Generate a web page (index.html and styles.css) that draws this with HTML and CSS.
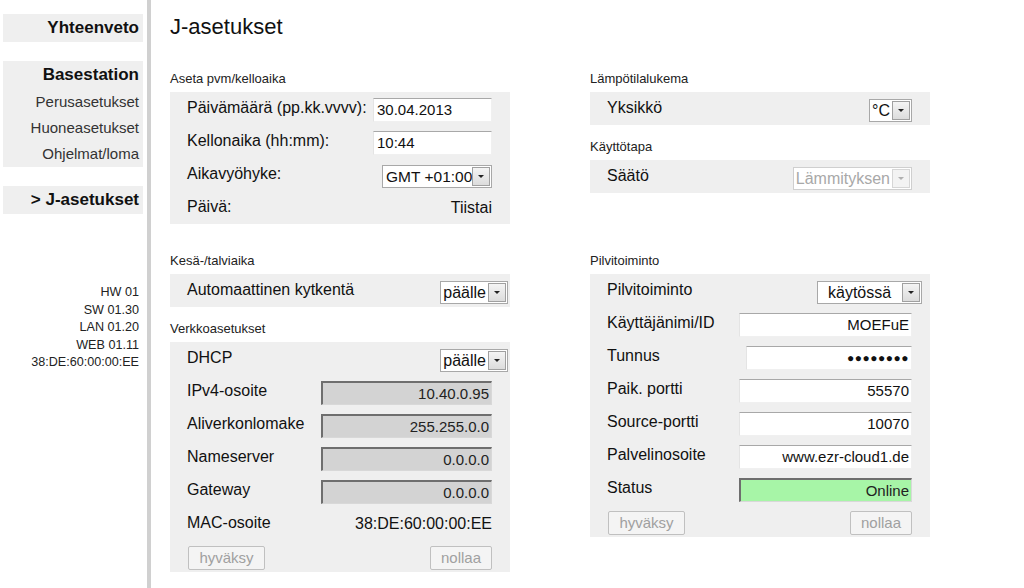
FILE: index.html
```html
<!DOCTYPE html>
<html lang="fi">
<head>
<meta charset="utf-8">
<title>J-asetukset</title>
<link rel="stylesheet" href="styles.css">
</head>
<body>
<div class="page">
  <nav class="sidebar">
    <div class="navbox"><div class="nav-title">Yhteenveto</div></div>
    <div class="navbox">
      <div class="nav-title">Basestation</div>
      <div class="nav-link">Perusasetukset</div>
      <div class="nav-link">Huoneasetukset</div>
      <div class="nav-link">Ohjelmat/loma</div>
    </div>
    <div class="navbox"><div class="nav-title">&gt; J-asetukset</div></div>
    <div class="versions">
      <div>HW 01</div>
      <div>SW 01.30</div>
      <div>LAN 01.20</div>
      <div>WEB 01.11</div>
      <div>38:DE:60:00:00:EE</div>
    </div>
  </nav>
  <main class="main">
    <h1 class="title">J-asetukset</h1>
    <div class="grid">
      <div class="col">
        <div class="sec-label">Aseta pvm/kelloaika</div>
        <div class="box">
          <div class="row"><span class="lbl">Päivämäärä (pp.kk.vvvv):</span><span class="inp inp-left w-date">30.04.2013</span></div>
          <div class="row"><span class="lbl">Kellonaika (hh:mm):</span><span class="inp inp-left w-date">10:44</span></div>
          <div class="row"><span class="lbl">Aikavyöhyke:</span><span class="sel w-gmt"><span class="sel-text">GMT +01:00</span><span class="sel-btn"></span></span></div>
          <div class="row"><span class="lbl">Päivä:</span><span class="val">Tiistai</span></div>
        </div>
      </div>
      <div class="col">
        <div class="sec-label">Lämpötilalukema</div>
        <div class="box">
          <div class="row"><span class="lbl">Yksikkö</span><span class="sel"><span class="sel-text">°C</span><span class="sel-btn"></span></span></div>
        </div>
        <div class="sec-label sec-gap">Käyttötapa</div>
        <div class="box">
          <div class="row"><span class="lbl">Säätö</span><span class="sel sel-disabled"><span class="sel-text">Lämmityksen</span><span class="sel-btn"></span></span></div>
        </div>
      </div>
      <div class="col">
        <div class="sec-label">Kesä-/talviaika</div>
        <div class="box">
          <div class="row row-wide"><span class="lbl">Automaattinen kytkentä</span><span class="sel"><span class="sel-text">päälle</span><span class="sel-btn"></span></span></div>
        </div>
        <div class="sec-label sec-gap">Verkkoasetukset</div>
        <div class="box">
          <div class="row row-wide"><span class="lbl">DHCP</span><span class="sel"><span class="sel-text">päälle</span><span class="sel-btn"></span></span></div>
          <div class="row"><span class="lbl">IPv4-osoite</span><span class="inp ro w-net">10.40.0.95</span></div>
          <div class="row"><span class="lbl">Aliverkonlomake</span><span class="inp ro w-net">255.255.0.0</span></div>
          <div class="row"><span class="lbl">Nameserver</span><span class="inp ro w-net">0.0.0.0</span></div>
          <div class="row"><span class="lbl">Gateway</span><span class="inp ro w-net">0.0.0.0</span></div>
          <div class="row"><span class="lbl">MAC-osoite</span><span class="val">38:DE:60:00:00:EE</span></div>
          <div class="btn-row"><span class="btn w-ok">hyväksy</span><span class="btn w-reset">nollaa</span></div>
        </div>
      </div>
      <div class="col">
        <div class="sec-label">Pilvitoiminto</div>
        <div class="box">
          <div class="row row-cloud"><span class="lbl">Pilvitoiminto</span><span class="sel w-cloud"><span class="sel-text">käytössä</span><span class="sel-btn"></span></span></div>
          <div class="row"><span class="lbl">Käyttäjänimi/ID</span><span class="inp w-cl">MOEFuE</span></div>
          <div class="row"><span class="lbl">Tunnus</span><span class="inp w-pw pw">●●●●●●●●</span></div>
          <div class="row"><span class="lbl">Paik. portti</span><span class="inp w-cl">55570</span></div>
          <div class="row"><span class="lbl">Source-portti</span><span class="inp w-cl">10070</span></div>
          <div class="row"><span class="lbl">Palvelinosoite</span><span class="inp w-cl">www.ezr-cloud1.de</span></div>
          <div class="row"><span class="lbl">Status</span><span class="inp ro online w-cl">Online</span></div>
          <div class="btn-row"><span class="btn w-ok">hyväksy</span><span class="btn w-reset">nollaa</span></div>
        </div>
      </div>
    </div>
  </main>
</div>
</body>
</html>
```

FILE: styles.css
```css
* { box-sizing: border-box; }
html, body { margin: 0; padding: 0; background: #fff; }
body {
  font-family: "Liberation Sans", Arial, sans-serif;
  color: #111;
  width: 1024px;
  height: 588px;
  overflow: hidden;
}
.page { display: flex; height: 588px; }

.sidebar {
  width: 151px;
  flex: none;
  border-right: 4px solid #d0d0d0;
  padding: 14px 4px 0 3px;
  display: flex;
  flex-direction: column;
  gap: 19px;
}
.navbox {
  background: #efefef;
  text-align: right;
  padding-right: 4px;
}
.nav-title {
  font-weight: bold;
  font-size: 17px;
  line-height: 28px;
  color: #111;
}
.nav-link {
  font-size: 15px;
  line-height: 26px;
  color: #333;
}
.versions {
  margin-top: 51px;
  text-align: right;
  padding-right: 4px;
  font-size: 12.6px;
  line-height: 17.5px;
  color: #222;
}

.main { flex: 1; padding: 14px 0 0 19px; }
.title {
  margin: 0;
  font-size: 22px;
  line-height: 26px;
  font-weight: normal;
  color: #111;
}
.grid {
  margin-top: 31px;
  display: grid;
  grid-template-columns: 340px 340px;
  column-gap: 80px;
  row-gap: 29px;
  align-items: start;
}
.sec-label {
  font-size: 13px;
  line-height: 16px;
  color: #222;
  margin-bottom: 5px;
}
.sec-gap { margin-top: 14px; }
.box { background: #efefef; }
.row {
  height: 33px;
  display: flex;
  align-items: center;
  justify-content: space-between;
  padding: 0 18px 0 17px;
}
.row-wide { padding-right: 2px; }
.row-cloud { padding-right: 8px; }
.lbl { font-size: 16px; color: #111; margin-top: -1px; white-space: nowrap; }
.val { font-size: 16px; color: #111; white-space: nowrap; }

.inp {
  height: 24px;
  background: #fff;
  border-top: 1px solid #a8a8a8;
  border-left: 1px solid #e4e4e4;
  border-right: 1px solid #f0f0f0;
  border-bottom: 1px solid #f0f0f0;
  font-size: 15px;
  line-height: 22px;
  padding: 0 2px 0 3px;
  text-align: right;
  color: #111;
  margin-top: 2px;
  white-space: nowrap;
}
.inp-left { text-align: left; }
.ro {
  background: #d3d3d3;
  border-top: 2px solid #6e6e6e;
  border-left: 2px solid #6e6e6e;
  border-right: 1px solid #d8d8d8;
  border-bottom: 1px solid #d8d8d8;
  line-height: 21px;
  color: #222;
}
.online { background: #a7f5a7; }
.pw { font-size: 12px; letter-spacing: 0.5px; }
.w-date { width: 119px; }
.w-net { width: 171px; }
.w-cl { width: 173px; }
.w-pw { width: 166px; }

.sel {
  display: inline-flex;
  align-items: center;
  height: 23px;
  background: #fff;
  border: 1px solid #a8a8a8;
  font-size: 16px;
  color: #111;
  margin-top: 3px;
  white-space: nowrap;
}
.sel-text { flex: 1; padding: 0 2px 0 2px; line-height: 21px; }
.sel-btn {
  flex: none;
  width: 18px;
  height: 19px;
  margin-right: 1px;
  border: 1px solid #a0a0a0;
  background: linear-gradient(#f4f4f4, #dcdcdc);
  position: relative;
}
.sel-btn::after {
  content: "";
  position: absolute;
  left: 5px;
  top: 7px;
  border-left: 3px solid transparent;
  border-right: 3px solid transparent;
  border-top: 3px solid #222;
}
.w-gmt { width: 110px; font-size: 15.5px; }
.w-gmt .sel-text { padding: 0 0 0 3px; }
.w-cloud { width: 105px; }
.w-cloud .sel-text { padding-left: 10px; }
.sel-disabled { color: #a8a8a8; border-color: #cfcfcf; }
.sel-disabled .sel-btn { border-color: #d6d6d6; background: #f3f3f3; }
.sel-disabled .sel-btn::after { border-top-color: #b0b0b0; }

.btn-row {
  height: 32px;
  display: flex;
  justify-content: space-between;
  align-items: flex-start;
  padding: 6px 18px 0 18px;
}
.btn {
  height: 24px;
  border: 1px solid #c0c0c0;
  border-radius: 2px;
  background: #f4f4f4;
  color: #a0a0a0;
  font-size: 15px;
  line-height: 22px;
  text-align: center;
}
.w-ok { width: 77px; }
.w-reset { width: 62px; }
```
